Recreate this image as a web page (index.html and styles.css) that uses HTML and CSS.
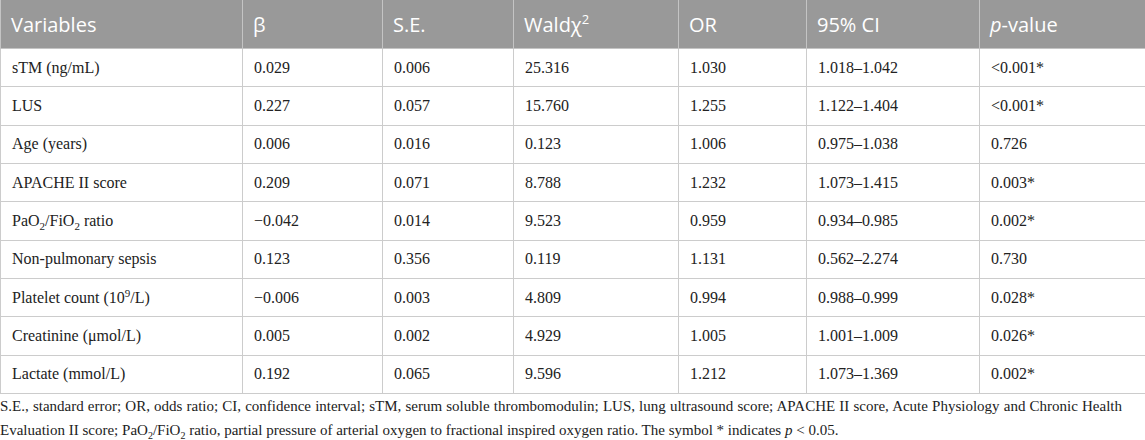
FILE: index.html
```html
<!DOCTYPE html>
<html lang="en">
<head>
    <meta charset="UTF-8">
    <meta name="viewport" content="width=device-width, initial-scale=1.0">
    <title>Logistic regression table</title>
    <link rel="stylesheet" href="styles.css">
</head>
<body>
    <table class="results">
        <colgroup>
            <col style="width: 242px">
            <col style="width: 140px">
            <col style="width: 131px">
            <col style="width: 165px">
            <col style="width: 128px">
            <col style="width: 173px">
            <col style="width: 166px">
        </colgroup>
        <thead>
            <tr>
                <th>Variables</th>
                <th>&beta;</th>
                <th>S.E.</th>
                <th>Wald&chi;<sup>2</sup></th>
                <th>OR</th>
                <th>95% CI</th>
                <th><i>p</i>-value</th>
            </tr>
        </thead>
        <tbody>
            <tr>
                <td>sTM (ng/mL)</td>
                <td>0.029</td>
                <td>0.006</td>
                <td>25.316</td>
                <td>1.030</td>
                <td>1.018&ndash;1.042</td>
                <td>&lt;0.001*</td>
            </tr>
            <tr>
                <td>LUS</td>
                <td>0.227</td>
                <td>0.057</td>
                <td>15.760</td>
                <td>1.255</td>
                <td>1.122&ndash;1.404</td>
                <td>&lt;0.001*</td>
            </tr>
            <tr>
                <td>Age (years)</td>
                <td>0.006</td>
                <td>0.016</td>
                <td>0.123</td>
                <td>1.006</td>
                <td>0.975&ndash;1.038</td>
                <td>0.726</td>
            </tr>
            <tr>
                <td>APACHE II score</td>
                <td>0.209</td>
                <td>0.071</td>
                <td>8.788</td>
                <td>1.232</td>
                <td>1.073&ndash;1.415</td>
                <td>0.003*</td>
            </tr>
            <tr>
                <td>PaO<sub>2</sub>/FiO<sub>2</sub> ratio</td>
                <td>&minus;0.042</td>
                <td>0.014</td>
                <td>9.523</td>
                <td>0.959</td>
                <td>0.934&ndash;0.985</td>
                <td>0.002*</td>
            </tr>
            <tr>
                <td>Non-pulmonary sepsis</td>
                <td>0.123</td>
                <td>0.356</td>
                <td>0.119</td>
                <td>1.131</td>
                <td>0.562&ndash;2.274</td>
                <td>0.730</td>
            </tr>
            <tr>
                <td>Platelet count (10<sup>9</sup>/L)</td>
                <td>&minus;0.006</td>
                <td>0.003</td>
                <td>4.809</td>
                <td>0.994</td>
                <td>0.988&ndash;0.999</td>
                <td>0.028*</td>
            </tr>
            <tr>
                <td>Creatinine (&mu;mol/L)</td>
                <td>0.005</td>
                <td>0.002</td>
                <td>4.929</td>
                <td>1.005</td>
                <td>1.001&ndash;1.009</td>
                <td>0.026*</td>
            </tr>
            <tr>
                <td>Lactate (mmol/L)</td>
                <td>0.192</td>
                <td>0.065</td>
                <td>9.596</td>
                <td>1.212</td>
                <td>1.073&ndash;1.369</td>
                <td>0.002*</td>
            </tr>
        </tbody>
    </table>

    <div class="footnote">
        <div class="footnote-line full">S.E., standard error; OR, odds ratio; CI, confidence interval; sTM, serum soluble thrombomodulin; LUS, lung ultrasound score; APACHE II score, Acute Physiology and Chronic Health</div>
        <div class="footnote-line">Evaluation II score; PaO<sub>2</sub>/FiO<sub>2</sub> ratio, partial pressure of arterial oxygen to fractional inspired oxygen ratio. The symbol * indicates <i>p</i> &lt; 0.05.</div>
    </div>
</body>
</html>
```

FILE: styles.css
```css
body {
    margin: 0;
    background: #fff;
    color: #222;
    font-family: "Liberation Serif", "Times New Roman", serif;
}
.results {
    width: 1145px;
    border-collapse: collapse;
    table-layout: fixed;
}
.results th {
    height: 48px;
    padding: 0 10px;
    background: #999999;
    color: #fff;
    font-family: "Open Sans", "Liberation Sans", sans-serif;
    font-size: 20px;
    font-weight: normal;
    text-align: left;
    border: 1px solid #c4c4c4;
    border-top: none;
}
.results th sup {
    font-size: 13px;
    line-height: 0;
}
.results td {
    height: 37.35px;
    padding: 0 11px;
    font-size: 16px;
    border: 1px solid #cccccc;
    white-space: nowrap;
}
.results td sub,
.results td sup {
    font-size: 11px;
    line-height: 0;
}
.footnote {
    font-size: 15px;
    line-height: 24px;
    color: #222;
}
.footnote sub {
    font-size: 10px;
    line-height: 0;
}
.footnote-line.full {
    width: 1122px;
    text-align: justify;
    text-align-last: justify;
}
```
